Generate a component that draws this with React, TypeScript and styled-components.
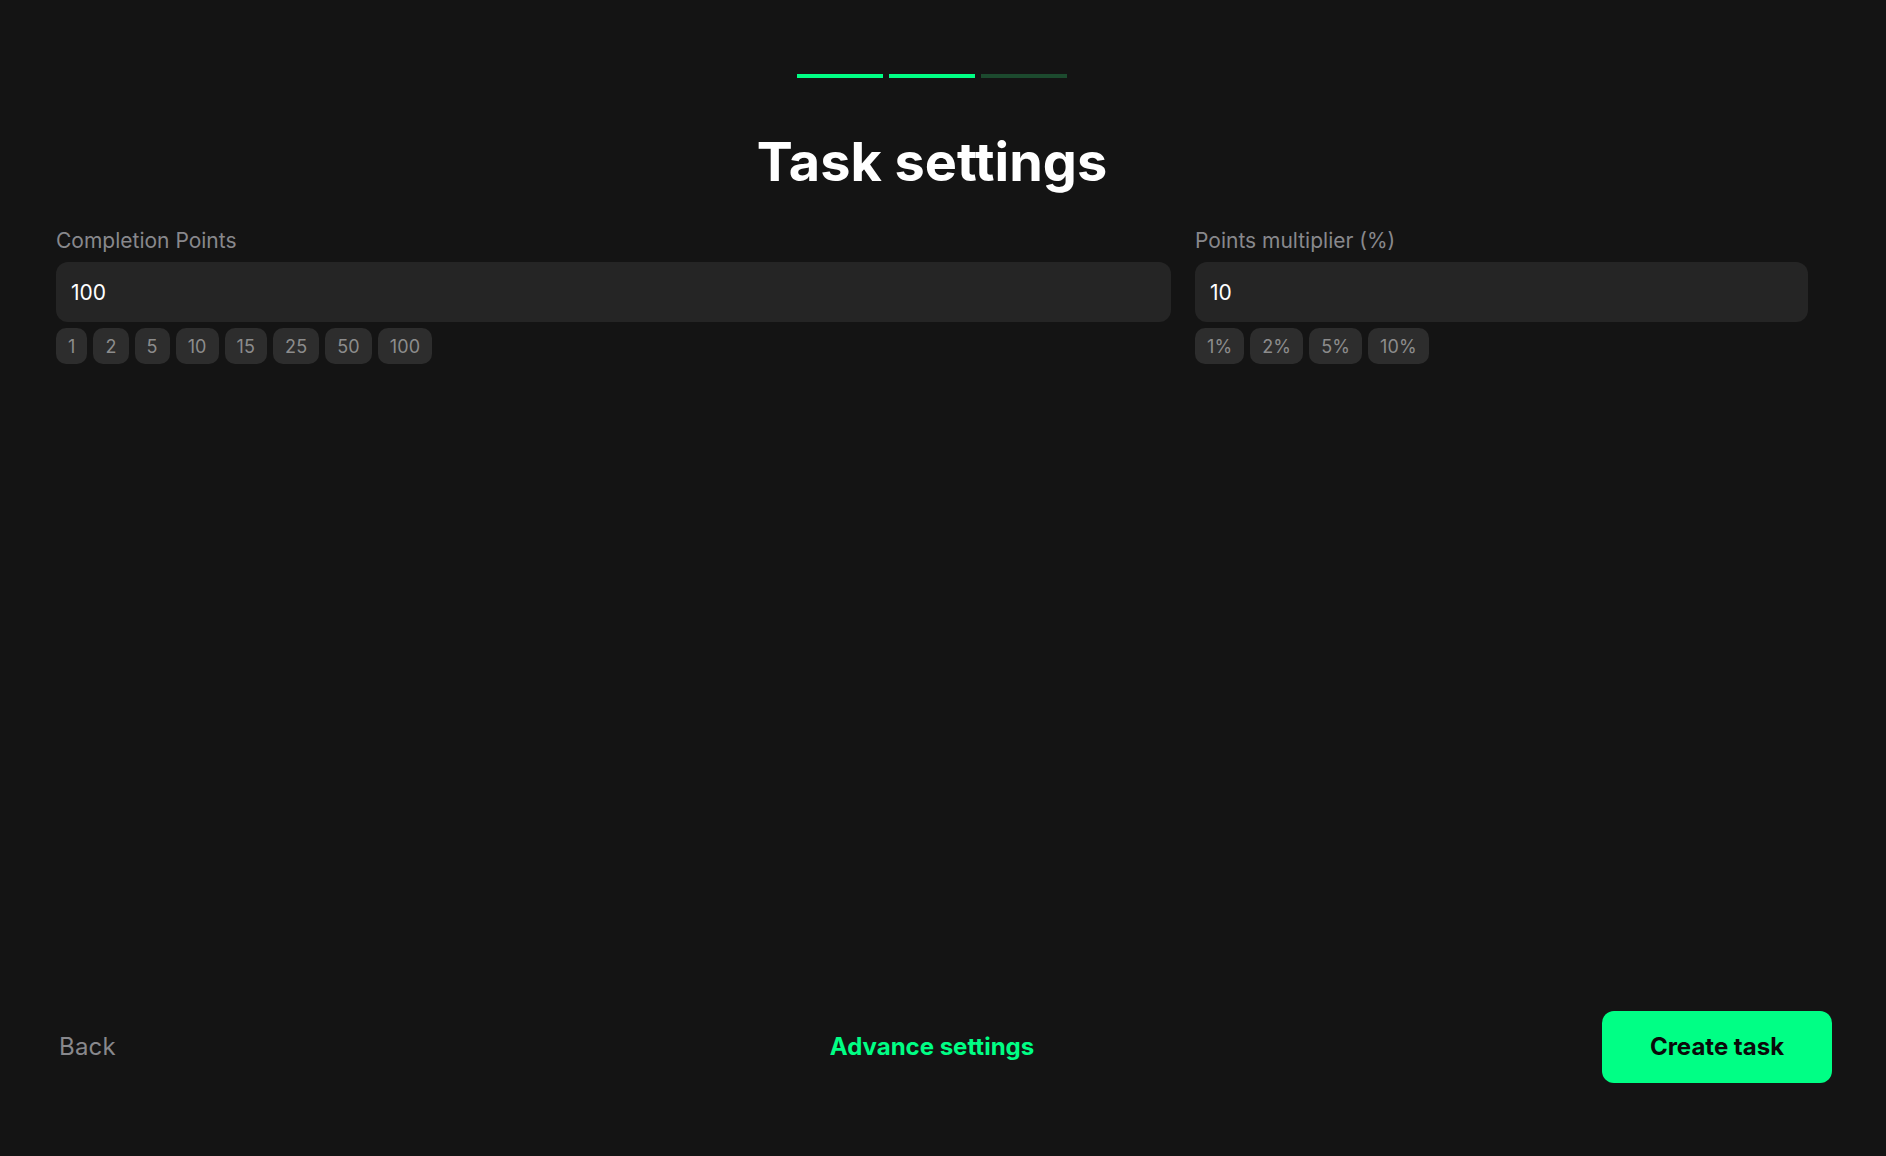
import React, { useState } from "react"
import styled, { createGlobalStyle } from "styled-components"

const pointOptions = [1, 2, 5, 10, 15, 25, 50, 100]
const multiplierOptions = [1, 2, 5, 10]

function App() {
    const [points, setPoints] = useState("100")
    const [multiplier, setMultiplier] = useState("10")

    return (
        <Page>
            <GlobalStyle />
            <Main>
                <Steps>
                    <Step $active />
                    <Step $active />
                    <Step />
                </Steps>
                <Title>Task settings</Title>
                <Fields>
                    <Field>
                        <Label htmlFor="points">Completion Points</Label>
                        <Input id="points" value={points} onChange={(e) => setPoints(e.target.value)} />
                        <Chips>
                            {pointOptions.map((n) => (
                                <Chip key={n} type="button" onClick={() => setPoints(String(n))}>{n}</Chip>
                            ))}
                        </Chips>
                    </Field>
                    <Field>
                        <Label htmlFor="multiplier">Points multiplier (%)</Label>
                        <Input id="multiplier" value={multiplier} onChange={(e) => setMultiplier(e.target.value)} />
                        <Chips>
                            {multiplierOptions.map((n) => (
                                <Chip key={n} type="button" onClick={() => setMultiplier(String(n))}>{n}%</Chip>
                            ))}
                        </Chips>
                    </Field>
                </Fields>
            </Main>
            <Footer>
                <BackButton type="button">Back</BackButton>
                <AdvanceButton type="button">Advance settings</AdvanceButton>
                <CreateButton type="button">Create task</CreateButton>
            </Footer>
        </Page>
    )
}

const GlobalStyle = createGlobalStyle`
    * {
        box-sizing: border-box;
    }
    html, body {
        margin: 0;
        background: #141414;
    }
    body {
        font-family: Inter, "Liberation Sans", sans-serif;
    }
`

const Page = styled.div`
    display: flex;
    flex-direction: column;
    justify-content: space-between;
    width: 1864px;
    height: 1156px;
    padding: 74px 32px 73px;
`

const Main = styled.div`
    display: flex;
    flex-direction: column;
    align-items: center;
    padding: 0 24px;
`

const Steps = styled.div`
    display: flex;
    gap: 6px;
`

const Step = styled.div<{ $active?: boolean }>`
    width: 86px;
    height: 4px;
    background: ${(p) => (p.$active ? "#00ff85" : "#1c4a2e")};
`

const Title = styled.h1`
    margin: 50px 0 33px;
    color: #fff;
    font-size: 54px;
    font-weight: 700;
    line-height: 68px;
`

const Fields = styled.div`
    display: grid;
    grid-template-columns: 1115fr 613fr;
    gap: 24px;
    width: 100%;
`

const Field = styled.div`
    display: flex;
    flex-direction: column;
`

const Label = styled.label`
    margin-bottom: 9px;
    color: #88888c;
    font-size: 21px;
    line-height: 24px;
`

const Input = styled.input`
    height: 60px;
    padding: 0 15px;
    border: none;
    border-radius: 12px;
    outline: none;
    background: #252525;
    color: #fff;
    font-family: inherit;
    font-size: 21px;
`

const Chips = styled.div`
    display: flex;
    gap: 6px;
    margin-top: 6px;
`

const Chip = styled.button`
    height: 36px;
    padding: 0 12px;
    border: none;
    border-radius: 10px;
    background: #2d2d2d;
    color: #8c8c8c;
    font-family: inherit;
    font-size: 18px;
    letter-spacing: 0.12px;
    cursor: pointer;
`

const Footer = styled.div`
    display: grid;
    grid-template-columns: 1fr auto 1fr;
    align-items: center;
`

const BackButton = styled.button`
    justify-self: start;
    padding: 0 27px 2px;
    border: none;
    background: none;
    color: #88888c;
    font-family: inherit;
    font-size: 24px;
    letter-spacing: 0.2px;
    cursor: pointer;
`

const AdvanceButton = styled.button`
    padding: 0 0 2px;
    border: none;
    background: none;
    color: #00ff85;
    font-family: inherit;
    font-size: 24px;
    font-weight: 700;
    cursor: pointer;
`

const CreateButton = styled.button`
    justify-self: end;
    width: 230px;
    height: 72px;
    padding: 0 0 2px;
    border: none;
    border-radius: 12px;
    background: #00ff85;
    color: #0a0a0a;
    font-family: inherit;
    font-size: 24px;
    font-weight: 700;
    cursor: pointer;
`

export default App
